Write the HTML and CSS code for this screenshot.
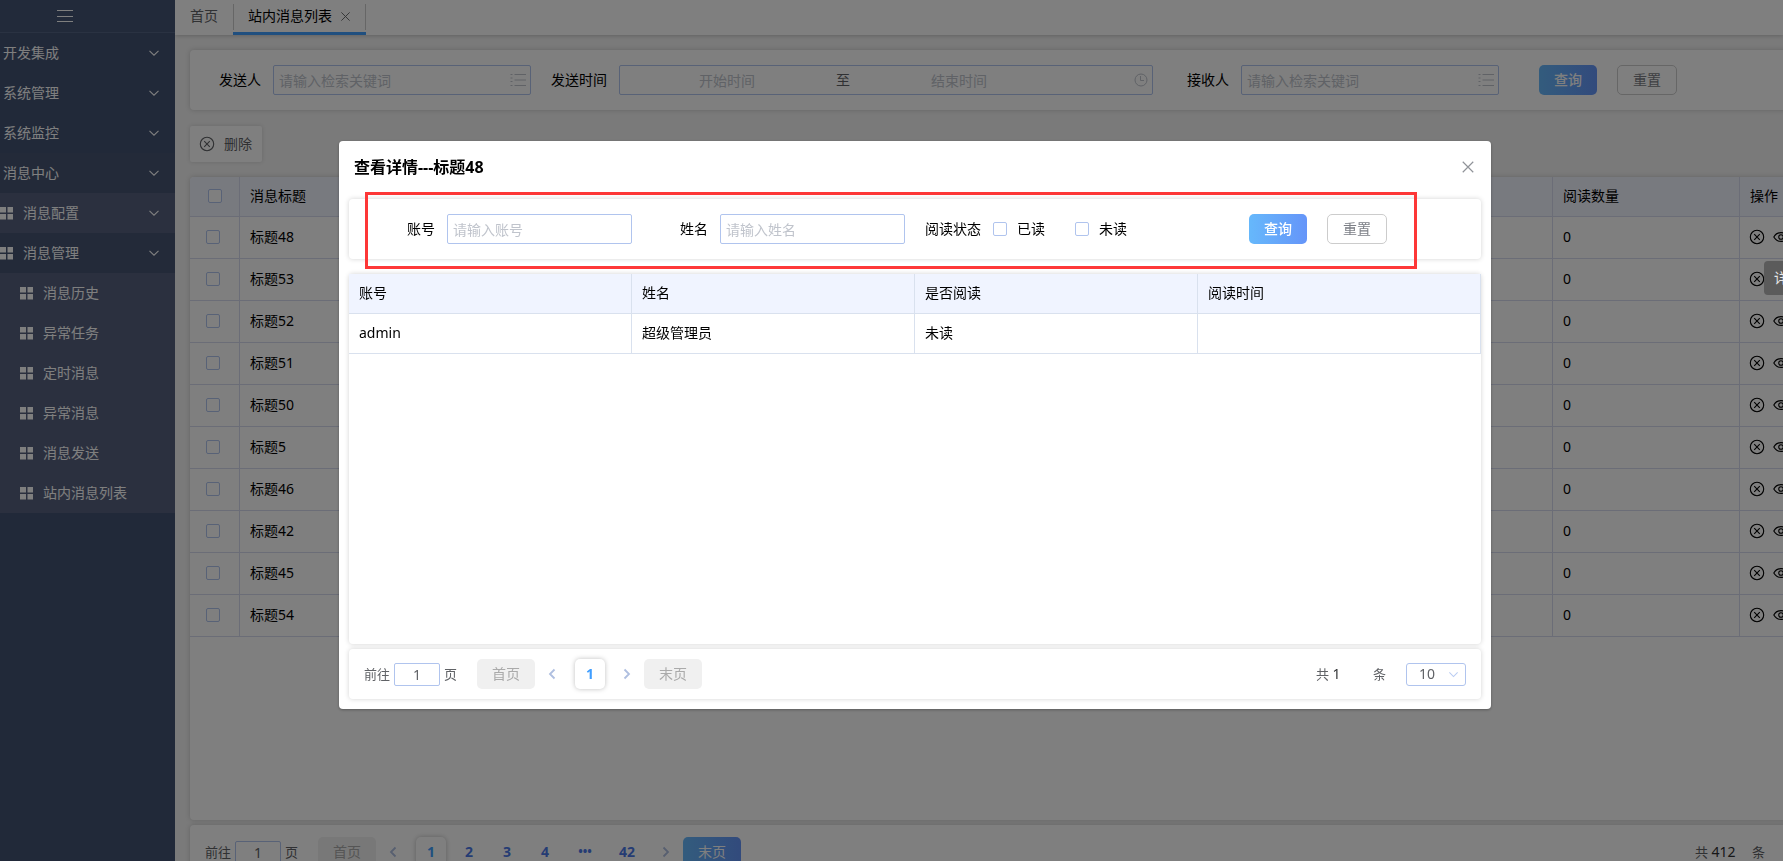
FILE: index.html
```html
<!DOCTYPE html>
<html lang="zh-CN">
<head>
<meta charset="utf-8">
<title>站内消息列表</title>
<link rel="stylesheet" href="styles.css">
</head>
<body>
<svg class="sprite" aria-hidden="true">
  <symbol id="chevron" viewBox="0 0 12 12"><path d="M1.5 3.8 6 8.2l4.5-4.4" fill="none" stroke="currentColor" stroke-width="1.1"/></symbol>
  <symbol id="grid" viewBox="0 0 13 13"><path d="M0 0h6v5.500H0zM7.500 0h5.500v5.500H7.500zM0 7h6v5.500H0zM7.500 7h5.500v5.500H7.500z" fill="currentColor"/></symbol>
  <symbol id="close" viewBox="0 0 12 12"><path d="m1.500 1.500 9 9m0-9-9 9" fill="none" stroke="currentColor"/></symbol>
  <symbol id="remove" viewBox="0 0 16 16"><g fill="none" stroke="currentColor" stroke-width="1.100"><circle cx="8" cy="8" r="6.700"/><path d="m5.200 5.200 5.600 5.600m0-5.600-5.600 5.600"/></g></symbol>
  <symbol id="eye" viewBox="0 0 16 16"><g fill="none" stroke="currentColor" stroke-width="1.100"><path d="M.8 8C2.500 5 5 3.600 8 3.600S13.500 5 15.200 8c-1.700 3-4.200 4.400-7.200 4.400S2.500 11 .8 8z"/><circle cx="8" cy="8" r="2.300"/></g></symbol>
  <symbol id="list" viewBox="0 0 16 14"><path d="M4.500 1.500H16M4.500 7H16M4.500 12.500H16M.5 1.500h2M.5 5h2M.5 8.500h2M.5 12.500h2" fill="none" stroke="currentColor"/></symbol>
  <symbol id="clock" viewBox="0 0 14 14"><g fill="none" stroke="currentColor"><circle cx="7" cy="7" r="6"/><path d="M6.500 3v4.500H10"/></g></symbol>
  <symbol id="prev" viewBox="0 0 12 12"><path d="M8.500 1.500 4 6l4.500 4.500" fill="none" stroke="currentColor" stroke-width="1.800"/></symbol>
  <symbol id="next" viewBox="0 0 12 12"><path d="M3.500 1.500 8 6l-4.500 4.500" fill="none" stroke="currentColor" stroke-width="1.800"/></symbol>
</svg>

<div class="shell">
  <nav class="sidebar">
    <button class="menu-toggle" aria-label="折叠菜单"><svg width="16" height="14" viewBox="0 0 16 14"><path d="M0 1.500h16M0 7.500h16M0 12.500h16" stroke="currentColor"/></svg></button>
    <a class="item" href="#">开发集成<svg class="arrow"><use href="#chevron"/></svg></a>
    <a class="item" href="#">系统管理<svg class="arrow"><use href="#chevron"/></svg></a>
    <a class="item" href="#">系统监控<svg class="arrow"><use href="#chevron"/></svg></a>
    <a class="item open" href="#">消息中心<svg class="arrow"><use href="#chevron"/></svg></a>
    <a class="item second sub" href="#"><svg class="tile"><use href="#grid"/></svg>消息配置<svg class="arrow"><use href="#chevron"/></svg></a>
    <a class="item second open" href="#"><svg class="tile"><use href="#grid"/></svg>消息管理<svg class="arrow"><use href="#chevron"/></svg></a>
    <a class="item third sub" href="#"><svg class="tile"><use href="#grid"/></svg>消息历史</a>
    <a class="item third sub" href="#"><svg class="tile"><use href="#grid"/></svg>异常任务</a>
    <a class="item third sub" href="#"><svg class="tile"><use href="#grid"/></svg>定时消息</a>
    <a class="item third sub" href="#"><svg class="tile"><use href="#grid"/></svg>异常消息</a>
    <a class="item third sub" href="#"><svg class="tile"><use href="#grid"/></svg>消息发送</a>
    <a class="item third sub" href="#"><svg class="tile"><use href="#grid"/></svg>站内消息列表</a>
  </nav>

  <main class="main">
    <div class="tabs">
      <a class="tab" href="#">首页</a>
      <a class="tab active" href="#"><span>站内消息列表</span><svg class="tab-close"><use href="#close"/></svg></a>
    </div>
    <div class="content">
      <form class="card search">
        <div class="field"><label for="sender">发送人</label><div class="box wide"><input id="sender" type="text" placeholder="请输入检索关键词"><svg class="list"><use href="#list"/></svg></div></div>
        <div class="field"><label for="start">发送时间</label><div class="box range"><input id="start" type="text" placeholder="开始时间"><span>至</span><input type="text" placeholder="结束时间" aria-label="结束时间"><svg class="clock"><use href="#clock"/></svg></div></div>
        <div class="field"><label for="receiver">接收人</label><div class="box wide"><input id="receiver" type="text" placeholder="请输入检索关键词"><svg class="list"><use href="#list"/></svg></div></div>
        <div class="actions"><button type="button" class="btn primary">查询</button><button type="button" class="btn plain">重置</button></div>
      </form>
      <button class="delete"><svg class="round"><use href="#remove"/></svg>删除</button>
      <section class="card list-card">
        <table class="messages">
          <colgroup><col class="c-check"><col class="c-title"><col><col class="c-count"><col class="c-action"></colgroup>
          <thead><tr><th><input type="checkbox" aria-label="全选"></th><th>消息标题</th><th></th><th>阅读数量</th><th>操作</th></tr></thead>
          <tbody>
            <tr><td><input type="checkbox" aria-label="标题48"></td><td>标题48</td><td></td><td>0</td><td><div class="ops"><svg class="round"><use href="#remove"/></svg><svg class="round"><use href="#eye"/></svg></div></td></tr>
            <tr><td><input type="checkbox" aria-label="标题53"></td><td>标题53</td><td></td><td>0</td><td><div class="ops"><svg class="round"><use href="#remove"/></svg><svg class="round"><use href="#eye"/></svg></div></td></tr>
            <tr><td><input type="checkbox" aria-label="标题52"></td><td>标题52</td><td></td><td>0</td><td><div class="ops"><svg class="round"><use href="#remove"/></svg><svg class="round"><use href="#eye"/></svg></div></td></tr>
            <tr><td><input type="checkbox" aria-label="标题51"></td><td>标题51</td><td></td><td>0</td><td><div class="ops"><svg class="round"><use href="#remove"/></svg><svg class="round"><use href="#eye"/></svg></div></td></tr>
            <tr><td><input type="checkbox" aria-label="标题50"></td><td>标题50</td><td></td><td>0</td><td><div class="ops"><svg class="round"><use href="#remove"/></svg><svg class="round"><use href="#eye"/></svg></div></td></tr>
            <tr><td><input type="checkbox" aria-label="标题5"></td><td>标题5</td><td></td><td>0</td><td><div class="ops"><svg class="round"><use href="#remove"/></svg><svg class="round"><use href="#eye"/></svg></div></td></tr>
            <tr><td><input type="checkbox" aria-label="标题46"></td><td>标题46</td><td></td><td>0</td><td><div class="ops"><svg class="round"><use href="#remove"/></svg><svg class="round"><use href="#eye"/></svg></div></td></tr>
            <tr><td><input type="checkbox" aria-label="标题42"></td><td>标题42</td><td></td><td>0</td><td><div class="ops"><svg class="round"><use href="#remove"/></svg><svg class="round"><use href="#eye"/></svg></div></td></tr>
            <tr><td><input type="checkbox" aria-label="标题45"></td><td>标题45</td><td></td><td>0</td><td><div class="ops"><svg class="round"><use href="#remove"/></svg><svg class="round"><use href="#eye"/></svg></div></td></tr>
            <tr><td><input type="checkbox" aria-label="标题54"></td><td>标题54</td><td></td><td>0</td><td><div class="ops"><svg class="round"><use href="#remove"/></svg><svg class="round"><use href="#eye"/></svg></div></td></tr>
          </tbody>
        </table>
      </section>
      <div class="card pager tall">
        <label class="jump">前往<input type="text" value="1">页</label>
        <button class="edge" disabled>首页</button>
        <button class="step" aria-label="上一页"><svg><use href="#prev"/></svg></button>
        <div class="pages"><button class="page current">1</button><button class="page">2</button><button class="page">3</button><button class="page">4</button><button class="page more">•••</button><button class="page last">42</button></div>
        <button class="step" aria-label="下一页"><svg><use href="#next"/></svg></button>
        <button class="edge on">末页</button>
        <div class="total">共 <b>412</b></div><span class="unit">条</span>
        <div class="size"></div>
      </div>
    </div>
  </main>
</div>

<div class="overlay">
  <section class="modal" role="dialog" aria-labelledby="modal-title">
    <header class="modal-head"><h2 id="modal-title">查看详情---标题48</h2><button class="modal-close" aria-label="关闭"><svg><use href="#close"/></svg></button></header>
    <form class="card search inner">
      <div class="field"><label for="account">账号</label><div class="box"><input id="account" type="text" placeholder="请输入账号"></div></div>
      <div class="field"><label for="name">姓名</label><div class="box"><input id="name" type="text" placeholder="请输入姓名"></div></div>
      <div class="field"><span class="caption">阅读状态</span><div class="checks"><label><input type="checkbox">已读</label><label><input type="checkbox">未读</label></div></div>
      <div class="actions"><button type="button" class="btn primary">查询</button><button type="button" class="btn plain">重置</button></div>
    </form>
    <div class="card detail-card">
      <table class="detail">
        <thead><tr><th>账号</th><th>姓名</th><th>是否阅读</th><th>阅读时间</th></tr></thead>
        <tbody><tr><td>admin</td><td>超级管理员</td><td>未读</td><td></td></tr></tbody>
      </table>
    </div>
    <div class="card pager">
      <label class="jump">前往<input type="text" value="1">页</label>
      <button class="edge" disabled>首页</button>
      <button class="step" aria-label="上一页"><svg><use href="#prev"/></svg></button>
      <div class="pages"><button class="page current">1</button></div>
      <button class="step" aria-label="下一页"><svg><use href="#next"/></svg></button>
      <button class="edge" disabled>末页</button>
      <div class="total">共 <b>1</b></div><span class="unit">条</span>
      <div class="size"><select aria-label="每页条数"><option>10</option></select><svg><use href="#chevron"/></svg></div>
    </div>
    <div class="highlight"></div>
  </section>
</div>
<div class="tooltip" role="tooltip">详情</div>
</body>
</html>
```
FILE: styles.css
```css
* { box-sizing: border-box; }
body {
  margin: 0;
  height: 100vh;
  overflow: hidden;
  font: 14px/20px "Noto Sans", "Noto Sans CJK SC", sans-serif;
  color: #000;
}
button, input, select { font: inherit; color: inherit; margin: 0; padding: 0; border: 0; background: none; outline: 0; }
a { color: inherit; text-decoration: none; }
svg { display: block; flex: none; }
.sprite { position: absolute; width: 0; height: 0; }

.shell { display: flex; height: 100vh; overflow: hidden; background: #f4f4f4; }

/* Sidebar */
.sidebar { width: 175px; flex: none; background: #425272; color: #fff; }
.menu-toggle { display: flex; justify-content: center; align-items: center; width: 100%; height: 33px; padding-right: 45px; background: #455575; border-bottom: 1px solid #546484; }
.item { display: flex; align-items: center; height: 40px; padding: 0 15px 0 3px; }
.item .arrow { width: 12px; height: 12px; margin-left: auto; }
.tile { width: 13px; height: 13px; margin-right: 10px; }
.item.second { padding-left: 0; }
.item.third { padding-left: 20px; }
.item.open { background: #465573; }
.item.sub { background: #56617f; }

/* Tabs */
.main { flex: 1; min-width: 0; height: calc(100vh + 18px); display: flex; flex-direction: column; overflow: hidden; }
.tabs { display: flex; height: 35px; flex: none; background: #fff; box-shadow: 0 1px 4px rgba(0, 0, 0, .2); }
.tab { display: flex; align-items: center; height: 35px; padding: 0 15px 3px; color: #606266; }
.tab.active { gap: 8px; color: #000; border-bottom: 3px solid #409eff; padding: 0 15px; background: linear-gradient(#ccc, #ccc) left 4px / 1px 26px no-repeat, linear-gradient(#ccc, #ccc) right 4px / 1px 26px no-repeat; }
.tab-close { width: 11px; height: 11px; color: #606266; }

/* Page content runs past the right edge of the window */
.content { flex: 1; min-height: 0; display: flex; flex-direction: column; align-items: stretch; padding: 15px 0 0 15px; margin-right: -77px; }
.card { background: #fff; border-radius: 4px; box-shadow: 0 0 5px rgba(0, 0, 0, .18); }

/* Search forms */
.search { display: flex; align-items: center; gap: 20px; height: 60px; flex: none; padding-left: 15px; }
.field { display: flex; align-items: center; gap: 12px; }
.field > label, .caption { width: 56px; text-align: right; white-space: nowrap; }
.box { display: flex; align-items: center; width: 185px; height: 30px; padding: 0 4px 0 5px; border: 1px solid #b0c4ee; border-radius: 2px; }
.box.wide { width: 258px; }
.box.range { width: 534px; color: #606266; }
.box input { flex: 1; min-width: 0; width: 0; height: 28px; }
.box.range input { flex: 0 1 39%; text-align: center; }
.box.range span { width: 28px; text-align: center; }
.box input::placeholder { color: #c0c4cc; opacity: 1; }
.list { width: 16px; height: 14px; color: #c0c4cc; }
.clock { width: 14px; height: 14px; margin-left: auto; color: #c0c4cc; }
.actions { display: flex; gap: 20px; margin-left: 20px; }
.btn { height: 30px; border-radius: 5px; }
.primary { width: 58px; color: #fff; background: linear-gradient(90deg, #66b8fb, #6595f9); font-weight: 500; }
.plain { width: 60px; color: #7c7f86; border: 1px solid #ccc; }
.delete { display: flex; align-items: center; gap: 9px; align-self: flex-start; flex: none; width: 72px; height: 36px; margin: 16px 0 15px; padding-left: 9px; color: #606266; background: #fff; border-radius: 2px; box-shadow: 0 0 4px rgba(0, 0, 0, .14); }
.round { width: 16px; height: 16px; }

input[type="checkbox"] { appearance: none; display: block; flex: none; width: 14px; height: 14px; border: 1px solid #b0c4ee; border-radius: 2px; background: #fff; }

/* Tables */
table { width: 100%; table-layout: fixed; border-collapse: separate; border-spacing: 0; }
th, td { height: 40px; padding: 0 10px 1px; text-align: left; font-weight: 400; border-right: 1px solid #d9e1ee; border-bottom: 1px solid #d9e1ee; }
th { background: #f0f4ff; }
.messages td { height: 42px; }
.messages th, .messages td { border-color: #d6dbee; }
.messages td:first-child { padding-left: 16px; }
.messages th:first-child { padding-left: 18px; }
.messages td:last-child { padding-left: 9px; }
.c-check { width: 50px; }
.c-title { width: 300px; }
.c-count { width: 187px; }
.c-action { width: 120px; }
.list-card { flex: 1; min-height: 0; overflow: hidden; margin-bottom: 5px; }
.ops { display: flex; gap: 8px; }

/* Pagination */
.pager { display: flex; align-items: center; height: 50px; flex: none; padding: 0 15px; color: #606266; }
.pager.tall { height: 54px; }
.jump { display: flex; align-items: center; gap: 4px; font-size: 13px; }
.jump input { width: 46px; height: 23px; text-align: center; font-size: 14px; border: 1px solid #b0c4ee; border-radius: 2px; }
.edge { width: 58px; height: 30px; border-radius: 5px; background: #f0f0f0; color: #aaa; }
.jump + .edge { margin-left: 20px; }
.edge.on { color: #fff; background: linear-gradient(90deg, #66b8fb, #6595f9); }
.step { width: 34px; height: 30px; display: flex; justify-content: center; align-items: center; color: #afbfe0; }
.step svg { width: 12px; height: 12px; }
.pages { display: flex; gap: 8px; padding: 0 5px 0 6px; }
.page { width: 30px; height: 30px; font-weight: 700; color: #4a78e8; }
.page.current { color: #409eff; border-radius: 5px; background: #fff; box-shadow: 0 0 5px rgba(0, 0, 0, .25); }
.page.more { width: 34px; font-size: 12px; }
.page.last { width: 34px; }
.total { margin-left: auto; width: 57px; font-size: 13px; }
.total b { font-size: 14px; font-weight: 400; color: #303133; }
.unit { font-size: 13px; }
.size { position: relative; width: 60px; height: 23px; margin-left: 20px; }
.size select { appearance: none; width: 100%; height: 100%; padding-left: 12px; border: 1px solid #b0c4ee; border-radius: 3px; }
.size svg { position: absolute; right: 7px; top: 6px; width: 11px; height: 11px; color: #b8cbf2; }

/* Detail dialog */
.overlay { position: fixed; inset: 0; padding: 141px 292px 0 339px; background: rgba(0, 0, 0, .5); }
.modal { position: relative; padding: 0 10px 10px; background: #fff; border-radius: 4px; box-shadow: 0 1px 3px rgba(0, 0, 0, .3); }
.modal-head { display: flex; align-items: center; justify-content: space-between; height: 58px; padding: 0 6px 6px 5px; }
.modal-head h2 { margin: 0; font-size: 16px; line-height: 24px; }
.modal-close { width: 14px; height: 14px; color: #909399; }
.modal-close svg { width: 14px; height: 14px; }
.search.inner { padding-left: 30px; }
.inner .actions { margin-left: 102px; }
.checks { display: flex; gap: 30px; }
.checks label { display: flex; align-items: center; gap: 10px; }
.detail-card { min-height: 370px; margin: 15px 0 5px; }
.highlight { position: absolute; left: 26px; right: 74px; top: 51px; height: 77px; border: 3px solid #fd3737; pointer-events: none; }
.tooltip { position: fixed; left: calc(100vw - 19px); top: 261px; padding: 7px 10px; border-radius: 4px; white-space: nowrap; background: #5b5b5b; color: #e6e6e6; }
```
